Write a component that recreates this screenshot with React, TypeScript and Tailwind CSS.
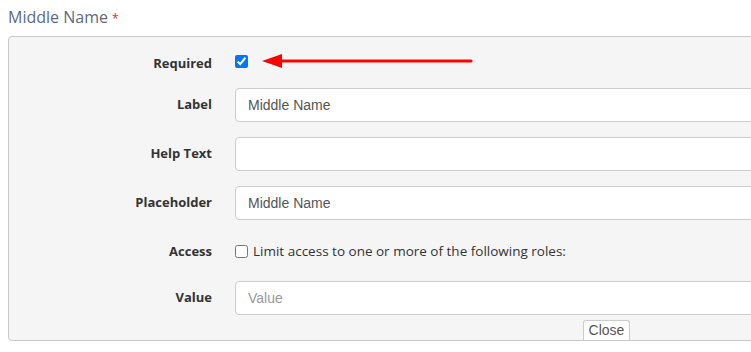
import React from "react";

const labelCls =
  "w-[203px] shrink-0 text-right text-[13px] font-bold text-[#333] [font-family:'Open_Sans',sans-serif]";

function Row({
  label,
  children,
  h = "h-[34px]",
  lbl = "",
}: {
  label: string;
  children: React.ReactNode;
  h?: string;
  lbl?: string;
}) {
  return (
    <div className={`flex items-center gap-[23px] ${h}`}>
      <div className={`${labelCls} ${lbl}`}>{label}</div>
      <div className="flex flex-1 items-center">{children}</div>
    </div>
  );
}

function TextBox({ value, placeholder }: { value?: string; placeholder?: string }) {
  return (
    <input
      readOnly
      defaultValue={value}
      placeholder={placeholder}
      className="h-[34px] w-[900px] rounded-[4px] border border-[#ccc] bg-white px-[12px] text-[14px] text-[#555] outline-none [font-family:'Liberation_Sans',Arial,sans-serif] placeholder:text-[#999] placeholder:[font-family:'Liberation_Sans_Narrow','Arial_Narrow',sans-serif]"
    />
  );
}

export default function App() {
  return (
    <div className="h-[352px] w-[751px] overflow-hidden bg-white">
      <div className="px-[8px] pt-[5px]">
        <div className="h-[31px] text-[16px] text-[#5b6a82] [font-family:'Open_Sans',sans-serif]">
          Middle Name <span className="text-[12px] text-[#c0392b]">*</span>
        </div>

        <div className="relative w-[1200px] rounded-[4px] border border-[#c8c8c8] bg-[#f5f5f5] pt-[12px]">
          <div className="flex flex-col gap-[15px]">
            <Row label="Required" h="h-[24px]" lbl="pt-[6px]">
              <input type="checkbox" defaultChecked className="m-0 h-[13px] w-[13px]" />
              <svg width="212" height="18" viewBox="0 0 212 18" className="ml-[14px]">
                <polygon points="0,9 20,2 20,16" fill="#ff0000" />
                <line x1="18" y1="9" x2="209" y2="9" stroke="#ff0000" strokeWidth="3" strokeLinecap="round" />
              </svg>
            </Row>
            <Row label="Label">
              <TextBox value="Middle Name" />
            </Row>
            <Row label="Help Text">
              <TextBox />
            </Row>
            <Row label="Placeholder">
              <TextBox value="Middle Name" />
            </Row>
            <Row label="Access" h="h-[31px]" lbl="pt-[2px]">
              <label className="flex items-center gap-[5px] pt-[2px] text-[13.5px] text-[#333] [font-family:'Open_Sans',sans-serif]">
                <input type="checkbox" className="m-0 h-[13px] w-[13px]" />
                Limit access to one or more of the following roles:
              </label>
            </Row>
            <Row label="Value">
              <TextBox placeholder="Value" />
            </Row>
          </div>
          <div className="ml-[574px] mt-[5px] flex h-[20px] w-[47px] items-center justify-center rounded-t-[3px] border border-b-0 border-[#ccc] bg-white text-[14px] text-[#555] [font-family:'Liberation_Sans_Narrow','Arial_Narrow',sans-serif]">
            Close
          </div>
        </div>
      </div>
    </div>
  );
}
